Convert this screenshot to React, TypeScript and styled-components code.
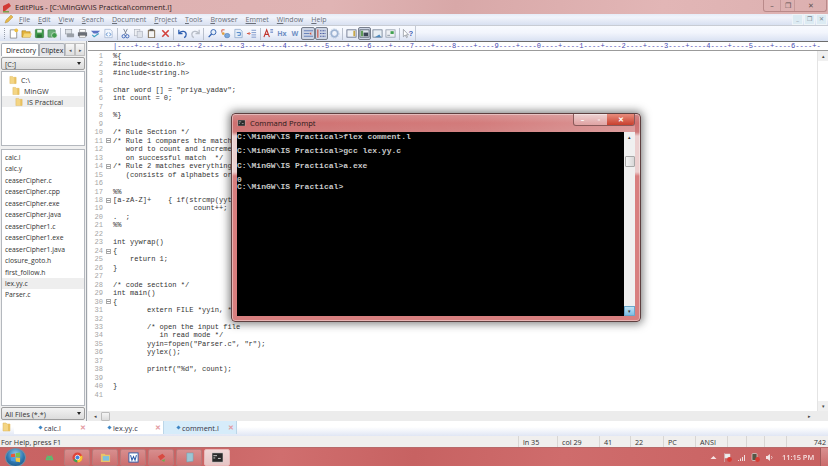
import * as React from 'react';
import styled, { createGlobalStyle } from 'styled-components';

const GlobalStyle = createGlobalStyle`
  html, body {
    margin: 0;
    padding: 0;
    height: 100%;
    overflow: hidden;
    background: #fff;
  }
  #root { height: 100%; }
`;

const UI_FONT = '"Open Sans", "Liberation Sans", sans-serif';
const MONO_FONT = '"Liberation Mono", monospace';

const Screen = styled.div`
  position: relative;
  width: 828px;
  height: 466px;
  display: flex;
  flex-direction: column;
  overflow: hidden;
  font-family: ${UI_FONT};
  color: #333;
  filter: blur(0.4px);
`;

/* title bar */
const TitleBar = styled.div`
  height: 14px;
  flex: none;
  display: flex;
  align-items: center;
  padding-left: 2px;
  background: linear-gradient(100deg, #dcb0b0 0%, #e0b4b4 40%, #d8a8a8 55%, #e2b6b6 80%, #dcb0b0 100%);
  font-size: 7.6px;
  color: #2c2020;
`;

const TitleText = styled.span`
  margin-left: 3px;
  flex: 1;
`;

const WinCaps = styled.div`
  display: flex;
  align-self: flex-start;
  height: 11px;
  margin-right: 1px;
  border: 1px solid #b98a8a;
  border-top: none;
  border-radius: 0 0 3px 3px;
`;

const WinCap = styled.div<{ $w: number }>`
  width: ${(p) => p.$w}px;
  display: flex;
  align-items: center;
  justify-content: center;
  color: #5c5050;
  font-size: 7px;
  line-height: 1;
  & + & { border-left: 1px solid #c79a9a; }
`;

/* menu bar */
const MenuBar = styled.div`
  height: 12px;
  flex: none;
  display: flex;
  align-items: center;
  padding-left: 4px;
  padding-bottom: 1px;
  background: linear-gradient(#e6ecf8, #f1f4fb 30%, #d8e0f1);
  border-bottom: 1px solid #c8ccd4;
  box-sizing: border-box;
  font-size: 7px;
  color: #6a6e78;
`;

const MenuItem = styled.span`
  margin-right: 8px;
  u { text-decoration: underline; text-underline-offset: 1px; }
`;

const ChildCaps = styled.div`
  margin-left: auto;
  display: flex;
  gap: 1px;
  height: 11px;
  margin-right: 1px;
`;

const ChildCap = styled.div`
  width: 11px;
  background: #dcebf3;
  border: 1px solid #eef4f8;
  box-sizing: border-box;
  display: flex;
  align-items: center;
  justify-content: center;
  color: #7c8792;
  font-size: 6px;
`;

/* tool bar */
const ToolBar = styled.div`
  height: 15px;
  flex: none;
  display: flex;
  align-items: center;
  padding-left: 4px;
  background: linear-gradient(#f8faff, #f2f5fc 45%, #d9e1f2);
`;

const ToolGrip = styled.div`
  width: 1px;
  height: 11px;
  margin-right: 0.5px;
  border-left: 1px dotted #9aa0ac;
`;

const ToolSep = styled.div`
  width: 1px;
  height: 12px;
  margin: 0 1.5px;
  background: #b9c0cd;
`;

const ToolBtn = styled.div<{ $on?: boolean }>`
  width: 13.1px;
  height: 13px;
  box-sizing: border-box;
  display: flex;
  align-items: center;
  justify-content: center;
  border-radius: 2px;
  border: 1px solid ${(p) => (p.$on ? '#777e8c' : 'transparent')};
  background: ${(p) => (p.$on ? '#ccd4e4' : 'transparent')};
  font-size: 7px;
  font-weight: 700;
  color: #6f8fc4;
  svg { width: 11px; height: 11px; display: block; }
`;

const ToolEnd = styled.div`
  width: 1px;
  height: 15px;
  margin-left: 1px;
  background: #c3c9d4;
`;

/* work area */
const Workspace = styled.div`
  flex: 1;
  min-height: 0;
  display: flex;
  background: #f0f0f0;
`;

const Sidebar = styled.div`
  width: 87px;
  flex: none;
  display: flex;
  flex-direction: column;
  padding: 2px 1px 1px 1px;
  box-sizing: border-box;
  background: #f0f0f0;
  border-right: 1px solid #9ea3aa;
`;

const SideTabs = styled.div`
  height: 14px;
  flex: none;
  display: flex;
  align-items: stretch;
  padding-bottom: 1px;
  box-sizing: border-box;
  font-size: 7px;
  color: #222;
`;

const SideTab = styled.div<{ $on?: boolean }>`
  width: ${(p) => (p.$on ? 38 : 26)}px;
  overflow: hidden;
  white-space: nowrap;
  display: flex;
  align-items: center;
  padding-left: ${(p) => (p.$on ? 4 : 1)}px;
  box-sizing: border-box;
  background: ${(p) => (p.$on ? '#fff' : '#e4e6ea')};
  border: 1px solid #a8adb5;
  border-bottom: none;
  border-radius: 2px 2px 0 0;
`;

const SideArrow = styled.div`
  width: 10px;
  display: flex;
  align-items: center;
  justify-content: center;
  font-size: 5px;
  color: #555;
  background: linear-gradient(#f7f7f7, #dedede);
  border: 1px solid #c0c0c0;
  box-sizing: border-box;
`;

const ComboBox = styled.div`
  flex: none;
  height: 13px;
  display: flex;
  align-items: center;
  justify-content: space-between;
  padding: 0 3px;
  box-sizing: border-box;
  font-size: 7.2px;
  color: #333;
  background: linear-gradient(#f3f3f3, #dcdcdc);
  border: 1px solid #9d9d9d;
  border-radius: 2px;
`;

const Caret = styled.span`
  width: 0;
  height: 0;
  border-left: 2.5px solid transparent;
  border-right: 2.5px solid transparent;
  border-top: 3px solid #222;
`;

const TreePanel = styled.div`
  flex: none;
  height: 75px;
  margin: 1px 0 3px;
  padding-top: 2px;
  box-sizing: border-box;
  background: #fff;
  border: 1px solid #b4b8be;
  font-size: 7.2px;
`;

const TreeRow = styled.div<{ $depth: number; $on?: boolean }>`
  height: 11px;
  display: flex;
  align-items: center;
  gap: 4px;
  padding-left: ${(p) => 7 + p.$depth * 3}px;
  background: ${(p) => (p.$on ? '#eeeeee' : 'transparent')};
  svg { width: 8px; height: 10px; flex: none; }
`;

const FileList = styled.div`
  flex: 1;
  min-height: 0;
  padding-top: 2px;
  box-sizing: border-box;
  background: #fff;
  border: 1px solid #b4b8be;
  font-size: 6.8px;
`;

const FileRow = styled.div<{ $on?: boolean }>`
  height: 11.46px;
  line-height: 11.46px;
  padding-left: 3px;
  background: ${(p) => (p.$on ? '#eeeeee' : 'transparent')};
`;

const FilterBox = styled(ComboBox)`
  margin-top: 1px;
`;

/* editor */
const EditorPane = styled.div`
  flex: 1;
  min-width: 0;
  display: flex;
  flex-direction: column;
  margin-left: 1px;
  background: #fff;
`;

const Ruler = styled.div`
  height: 10px;
  flex: none;
  padding-left: 25px;
  box-sizing: border-box;
  overflow: hidden;
  white-space: pre;
  background: #fff;
  border-top: 1px solid #6d6d6d;
  border-bottom: 1px solid #9b9b9b;
  font-family: ${MONO_FONT};
  font-size: 7.07px;
  line-height: 8px;
  color: #4a4ab0;
`;

const EditorBody = styled.div`
  flex: 1;
  min-height: 0;
  display: flex;
`;

const CodeArea = styled.div`
  flex: 1;
  min-width: 0;
  overflow: hidden;
  padding-top: 1px;
  font-family: ${MONO_FONT};
  font-size: 7.07px;
  color: #333;
`;

const CodeLine = styled.div`
  height: 8.47px;
  line-height: 8.47px;
  display: flex;
  white-space: pre;
`;

const LineNo = styled.span`
  width: 15px;
  flex: none;
  text-align: right;
  color: #a5a5a5;
`;

const FoldCell = styled.span`
  width: 10px;
  flex: none;
  display: flex;
  align-items: center;
  justify-content: center;
`;

const FoldBox = styled.span`
  width: 5px;
  height: 5px;
  box-sizing: border-box;
  border: 1px solid #aaa;
  position: relative;
  &::after {
    content: '';
    position: absolute;
    left: 0;
    right: 0;
    top: 1px;
    height: 1px;
    background: #999;
  }
`;

const VScroll = styled.div`
  width: 11px;
  flex: none;
  display: flex;
  flex-direction: column;
  justify-content: space-between;
  align-items: center;
  background: #fff;
  border-left: 1px solid #e4e4e4;
  box-sizing: border-box;
  font-size: 5px;
  color: #444;
`;

const ScrollArrow = styled.div`
  height: 10px;
  width: 100%;
  display: flex;
  align-items: center;
  justify-content: center;
  background: #f0f0f0;
`;

const HScroll = styled.div`
  height: 10px;
  flex: none;
  display: flex;
  align-items: center;
  background: #ececec;
  font-size: 5px;
  color: #444;
  padding-left: 6px;
`;

const HThumb = styled.div`
  width: 9px;
  height: 9px;
  margin-left: 4px;
  background: linear-gradient(#f5f5f5, #dcdcdc);
  border: 1px solid #bcbcbc;
  border-radius: 1px;
  box-sizing: border-box;
`;

const HEnd = styled.span`
  margin-left: auto;
  margin-right: 17px;
`;

/* document tabs */
const DocTabs = styled.div`
  height: 15px;
  flex: none;
  display: flex;
  align-items: flex-start;
  padding-left: 2px;
  background: linear-gradient(#fff 0, #fff 40%, #e0e6f4 100%);
  font-size: 7.4px;
  color: #334;
  svg { width: 9px; height: 10px; margin-top: 1px; margin-right: 3px; }
`;

const DocTab = styled.div<{ $w: number; $pad: number; $on?: boolean }>`
  width: ${(p) => p.$w}px;
  height: 13px;
  box-sizing: border-box;
  display: flex;
  align-items: center;
  padding-left: ${(p) => p.$pad}px;
  padding-right: 2px;
  gap: 2px;
  background: ${(p) => (p.$on ? '#d6ecfa' : '#fff')};
  border-right: ${(p) => (p.$on ? '1px solid #bcd6e8' : 'none')};
  border-left: ${(p) => (p.$on ? '1px solid #bcd6e8' : 'none')};
`;

const DocDot = styled.span`
  width: 3px;
  height: 3px;
  background: #3f86c4;
  transform: rotate(45deg);
  flex: none;
`;

const DocClose = styled.span`
  margin-left: auto;
  font-size: 7px;
  font-weight: 700;
  line-height: 1;
  color: #e39aa0;
`;

/* status bar */
const StatusBar = styled.div`
  height: 11px;
  flex: none;
  display: flex;
  align-items: center;
  background: #f0efee;
  font-size: 7.2px;
  color: #333;
`;

const StatusHelp = styled.div`
  flex: 1;
  padding-left: 1px;
`;

const StatusCell = styled.div<{ $w: number; $right?: boolean }>`
  width: ${(p) => p.$w}px;
  height: 100%;
  box-sizing: border-box;
  display: flex;
  align-items: center;
  justify-content: ${(p) => (p.$right ? 'flex-end' : 'flex-start')};
  padding: ${(p) => (p.$right ? '0 2px 0 0' : '0 0 0 4px')};
  border-left: 1px solid #d8d6d4;
`;

/* taskbar */
const Taskbar = styled.div`
  height: 19px;
  flex: none;
  display: flex;
  align-items: center;
  background: linear-gradient(100deg, #c96464 0%, #c86262 20%, #d06e6e 34%, #c76262 50%, #cf6c6c 68%, #c76060 100%);
  border-top: 1px solid #b86a6a;
  box-sizing: border-box;
`;

const StartOrb = styled.div`
  width: 21px;
  height: 19px;
  margin-left: 5px;
  border-radius: 50%;
  background: radial-gradient(circle at 50% 30%, #8fc8ea, #2f78b0 55%, #144a78);
  border: 1px solid #6c90a8;
  box-sizing: border-box;
  display: flex;
  align-items: center;
  justify-content: center;
  svg { width: 11px; height: 11px; }
`;

const TaskSlot = styled.div`
  width: 26px;
  margin-left: 10px;
  display: flex;
  justify-content: center;
  svg { width: 11px; height: 11px; }
`;

const TaskBtn = styled.div<{ $on?: boolean }>`
  width: 26px;
  height: 17px;
  margin-left: 2px;
  box-sizing: border-box;
  display: flex;
  align-items: center;
  justify-content: center;
  border: 1px solid ${(p) => (p.$on ? '#e8b8b8' : '#b87a7a')};
  border-radius: 2px;
  background: ${(p) =>
    p.$on
      ? 'linear-gradient(#f0d8d8, #e6c4c4)'
      : 'linear-gradient(rgba(255,255,255,.28), rgba(255,255,255,.08))'};
  svg { width: 11px; height: 11px; }
`;

const Tray = styled.div`
  margin-left: auto;
  height: 100%;
  display: flex;
  align-items: center;
  gap: 5px;
  color: #f7e4e4;
  svg { width: 9px; height: 9px; flex: none; }
`;

const Clock = styled.span`
  width: 30px;
  margin-left: 3px;
  white-space: nowrap;
  font-size: 7.4px;
  font-weight: 600;
  color: #f6e2e2;
`;

const ShowDesktop = styled.div`
  width: 8px;
  height: 100%;
  margin-left: 3px;
  background: linear-gradient(rgba(255,255,255,.3), rgba(255,255,255,.08));
  border-left: 1px solid #a05a5a;
  box-sizing: border-box;
`;

/* floating console window */
const ConsoleWindow = styled.div`
  position: absolute;
  left: 231px;
  top: 113px;
  width: 410px;
  height: 209px;
  box-sizing: border-box;
  display: flex;
  flex-direction: column;
  padding: 0 5px 5px 5px;
  border: 1px solid #5e4040;
  border-radius: 4px;
  background: linear-gradient(#d38a8a 0, #cf7070 9px, #cf7878 18px, #ecd0d0 22px, #ecd0d0 58px, #d87f7f 62px, #d87f7f 100%);
  box-shadow: 0 0 9px 2px rgba(30, 30, 30, 0.55), inset 0 0 0 1px rgba(255, 255, 255, 0.4);
`;

const ConsoleHead = styled.div`
  height: 18px;
  flex: none;
  display: flex;
  align-items: flex-start;
  background: linear-gradient(90deg, transparent 0, rgba(255,255,255,.08) 60%, rgba(255,255,255,.28) 100%);
`;

const ConsoleTitle = styled.span`
  flex: 1;
  display: flex;
  align-items: center;
  gap: 4px;
  height: 16px;
  margin-top: 1px;
  font-size: 7.6px;
  color: #2a1a1a;
  svg { width: 9px; height: 6px; }
`;

const ConsoleCaps = styled.div`
  display: flex;
  height: 11px;
  border: 1px solid #8a5a5a;
  border-top: none;
  border-radius: 0 0 3px 3px;
  overflow: hidden;
`;

const ConsoleCap = styled.div<{ $w: number; $red?: boolean }>`
  width: ${(p) => p.$w}px;
  display: flex;
  align-items: center;
  justify-content: center;
  font-size: 7px;
  font-weight: 700;
  line-height: 1;
  color: #fff;
  background: ${(p) =>
    p.$red
      ? 'linear-gradient(#e88c7c, #c8402e)'
      : 'linear-gradient(rgba(255,255,255,.5), rgba(255,255,255,.18))'};
`;

const ConsoleBody = styled.div`
  flex: 1;
  min-height: 0;
  display: flex;
`;

const ConsoleText = styled.pre`
  flex: 1;
  margin: 0;
  background: #000;
  color: #c8c8c8;
  font-family: ${MONO_FONT};
  font-size: 8.05px;
  font-weight: 700;
  line-height: 7.2px;
  padding-top: 1px;
  overflow: hidden;
`;

const ConsoleScroll = styled.div`
  width: 11px;
  flex: none;
  display: flex;
  flex-direction: column;
  align-items: center;
  background: #f0f0f0;
  font-size: 5px;
  color: #333;
`;

const ConsoleArrow = styled.div<{ $hot?: boolean }>`
  height: 10px;
  width: 100%;
  flex: none;
  box-sizing: border-box;
  display: flex;
  align-items: center;
  justify-content: center;
  background: ${(p) => (p.$hot ? 'linear-gradient(#bfe3f6, #7dbde4)' : '#f0f0f0')};
  border: 1px solid ${(p) => (p.$hot ? '#6aa8cc' : '#f0f0f0')};
`;

const ConsoleThumb = styled.div`
  width: 10px;
  height: 11px;
  margin-top: 14px;
  box-sizing: border-box;
  background: linear-gradient(90deg, #f4f4f4, #d8d8d8);
  border: 1px solid #a8a8a8;
  border-radius: 1px;
`;

const ScrollGap = styled.div`
  flex: 1;
`;

const Folder = ({ tone = '#f4d584' }: { tone?: string }) => (
  <svg viewBox="0 0 9 10">
    <path d="M1 1h3l1 1h3v7H1z" fill={tone} stroke="#dcb458" strokeWidth=".5" />
    <path d="M6 2h2v7H6z" fill="#e8c060" />
  </svg>
);

const icons: Record<string, React.ReactNode> = {
  new: (
    <svg viewBox="0 0 12 12">
      <path d="M2.5 2h5l2 2v7h-7z" fill="#fff" stroke="#7a7a7a" strokeWidth=".8" />
      <circle cx="9" cy="2.5" r="2" fill="#f0c040" />
    </svg>
  ),
  open: (
    <svg viewBox="0 0 12 12">
      <path d="M1 3h4l1 1h4v6H1z" fill="#e2b23c" stroke="#a07a20" strokeWidth=".6" />
      <path d="M2 10l1.5-4H12l-2 4z" fill="#f5d878" />
    </svg>
  ),
  save: (
    <svg viewBox="0 0 12 12">
      <rect x="1.5" y="1.5" width="9" height="9" rx=".8" fill="#3f9a4c" stroke="#2b6e36" strokeWidth=".6" />
      <rect x="3.5" y="2" width="5" height="3" fill="#e8f3e8" />
      <rect x="3.5" y="7" width="5" height="3.4" fill="#2b6e36" />
    </svg>
  ),
  saveall: (
    <svg viewBox="0 0 12 12">
      <rect x="1" y="2" width="8" height="8" rx=".8" fill="#6bb078" stroke="#38794a" strokeWidth=".6" />
      <circle cx="8" cy="8" r="3" fill="#3f9a4c" stroke="#e7f3e7" strokeWidth=".7" />
    </svg>
  ),
  preview: (
    <svg viewBox="0 0 12 12">
      <rect x="1.5" y="1.5" width="7" height="5" fill="#dfe3e8" stroke="#8a9098" strokeWidth=".6" />
      <rect x="3" y="6" width="8" height="4" rx=".6" fill="#9aa0a8" />
    </svg>
  ),
  print: (
    <svg viewBox="0 0 12 12">
      <rect x="3" y="1.5" width="6" height="3" fill="#fff" stroke="#777" strokeWidth=".6" />
      <rect x="1" y="4.5" width="10" height="4.5" rx=".6" fill="#6a6e76" />
      <rect x="3" y="8" width="6" height="2.5" fill="#f2f2f2" stroke="#777" strokeWidth=".5" />
    </svg>
  ),
  spell: (
    <svg viewBox="0 0 12 12">
      <path d="M1 3h10L8 6H4z" fill="#5c72c4" />
      <path d="M2.5 7.5l2 2 5-3.5" fill="none" stroke="#3fa0c0" strokeWidth="1.2" />
    </svg>
  ),
  browser: (
    <svg viewBox="0 0 12 12">
      <path d="M2 1.5h6l2 2v7H2z" fill="#f3f7fd" stroke="#8aa0c4" strokeWidth=".6" />
      <path d="M5 5L3.5 7 5 9M7 5l1.5 2L7 9" fill="none" stroke="#3f7ac4" strokeWidth=".9" />
    </svg>
  ),
  cut: (
    <svg viewBox="0 0 12 12">
      <path d="M4 1l3 6M8 1L5 7" stroke="#7a8290" strokeWidth="1" />
      <circle cx="4" cy="9" r="1.8" fill="none" stroke="#3a62b4" strokeWidth="1" />
      <circle cx="8" cy="9" r="1.8" fill="none" stroke="#3a62b4" strokeWidth="1" />
    </svg>
  ),
  copy: (
    <svg viewBox="0 0 12 12">
      <rect x="1.5" y="1.5" width="6" height="7" fill="#eef0f4" stroke="#a4a9b4" strokeWidth=".6" />
      <rect x="4.5" y="3.5" width="6" height="7" fill="#dfe3ea" stroke="#a4a9b4" strokeWidth=".6" />
    </svg>
  ),
  paste: (
    <svg viewBox="0 0 12 12">
      <rect x="2" y="2" width="8" height="9" rx=".6" fill="#8a7a64" />
      <rect x="3.2" y="3.5" width="5.6" height="6.5" fill="#f4f4f4" />
      <rect x="4" y="1" width="4" height="2" fill="#5c5c5c" />
    </svg>
  ),
  del: (
    <svg viewBox="0 0 12 12">
      <path d="M2.5 2.5l7 7M9.5 2.5l-7 7" stroke="#d2403c" strokeWidth="1.7" />
    </svg>
  ),
  undo: (
    <svg viewBox="0 0 12 12">
      <path d="M2 2v4h4M2.5 5.5C5 2.5 10 3.5 10 7c0 1.5-.8 2.8-2.2 3.5" fill="none" stroke="#2f5fb0" strokeWidth="1.4" />
    </svg>
  ),
  redo: (
    <svg viewBox="0 0 12 12">
      <path d="M10 2v4H6M9.5 5.5C7 2.500 2 3.500 2 7c0 1.500.8 2.800 2.200 3.500" fill="none" stroke="#b8bec8" strokeWidth="1.4" />
    </svg>
  ),
  find: (
    <svg viewBox="0 0 12 12">
      <circle cx="7" cy="4.5" r="2.8" fill="#e6f0fa" stroke="#2f5fb0" strokeWidth="1" />
      <path d="M5 6.5L1.8 10" stroke="#2f5fb0" strokeWidth="1.4" />
    </svg>
  ),
  replace: (
    <svg viewBox="0 0 12 12">
      <path d="M2 5V2h3" fill="none" stroke="#d2503c" strokeWidth="1" />
      <rect x="5" y="6" width="5.5" height="4.5" rx="2" fill="#7aa8dc" stroke="#3f6fb0" strokeWidth=".6" />
      <circle cx="3.5" cy="6" r="1.5" fill="#e0a040" />
    </svg>
  ),
  jump: (
    <svg viewBox="0 0 12 12">
      <path d="M2 1.5h6l2 2v7H2z" fill="#e6eef8" stroke="#7f9cc4" strokeWidth=".7" />
      <path d="M4 5h4v3H5" fill="none" stroke="#3f7ac4" strokeWidth="1" />
    </svg>
  ),
  indent: (
    <svg viewBox="0 0 12 12">
      <path d="M6 2.5h5M6 5h5M6 7.5h5M6 10h5" stroke="#6f8cc4" strokeWidth=".9" />
      <path d="M1 6h3M3 4.5L4.5 6 3 7.5" fill="none" stroke="#d2503c" strokeWidth="1" />
    </svg>
  ),
  font: (
    <svg viewBox="0 0 12 12">
      <path d="M1 10l3-8 3 8M2.2 7h3.6" fill="none" stroke="#c0342c" strokeWidth="1.2" />
      <path d="M8 2h3M8 4.5h3" stroke="#3f62b4" strokeWidth="1" />
    </svg>
  ),
  wrap: (
    <svg viewBox="0 0 12 12">
      <path d="M1 3h10M1 6h6M1 9h10" stroke="#5f7cb8" strokeWidth="1" />
      <path d="M7 6l2-1.5v3z" fill="#d2503c" />
    </svg>
  ),
  lineNo: (
    <svg viewBox="0 0 12 12">
      <path d="M2 1.5v9" stroke="#d2503c" strokeWidth="1.2" />
      <path d="M4.5 3h6M4.5 6h6M4.5 9h6" stroke="#44559c" strokeWidth="1.3" strokeDasharray="1 .6" />
    </svg>
  ),
  gear: (
    <svg viewBox="0 0 12 12">
      <circle cx="6" cy="6" r="3.6" fill="none" stroke="#9fb4d2" strokeWidth="2" />
      <circle cx="6" cy="6" r="5" fill="none" stroke="#b8c8de" strokeWidth="1" strokeDasharray="1.5 1.2" />
    </svg>
  ),
  paneA: (
    <svg viewBox="0 0 12 12">
      <rect x="1" y="2" width="10" height="8" fill="#eef2f8" stroke="#55607a" strokeWidth=".8" />
      <rect x="8" y="3" width="2" height="6" fill="#c8a848" />
    </svg>
  ),
  paneB: (
    <svg viewBox="0 0 12 12">
      <rect x="1" y="2" width="10" height="8" fill="#e0e6ee" stroke="#44505f" strokeWidth=".8" />
      <rect x="2" y="3" width="2.5" height="6" fill="#5f9a58" />
      <rect x="5" y="5" width="5" height="4" fill="#3c4656" />
    </svg>
  ),
  paneC: (
    <svg viewBox="0 0 12 12">
      <rect x="1" y="2" width="10" height="8" fill="#e8eef4" stroke="#667488" strokeWidth=".8" />
      <path d="M3 10l5-3 2 3z" fill="#4f8abe" />
    </svg>
  ),
  paneD: (
    <svg viewBox="0 0 12 12">
      <rect x="1" y="2" width="10" height="8" fill="#eef0f4" stroke="#8a94a4" strokeWidth=".8" />
      <rect x="6" y="3.5" width="3.5" height="3" fill="#3fa04c" />
      <path d="M2.5 8h3" stroke="#8a94a4" />
    </svg>
  ),
  help: (
    <svg viewBox="0 0 12 12">
      <path d="M1.5 1.5v8l2-1.8L5 10.5l1-.5-1.300-2.600H7z" fill="#fff" stroke="#6a6f78" strokeWidth=".6" />
      <text x="7" y="9" fontSize="8.5" fontWeight="700" fill="#3f62b4" fontFamily="Liberation Sans">?</text>
    </svg>
  ),
};

type ToolItem = string | { sep: true } | { label: string } | { icon: string; on: true };

const toolItems: ToolItem[] = [
  'new', 'open', 'save', 'saveall', { sep: true },
  'preview', 'print', 'spell', 'browser', { sep: true },
  'cut', 'copy', 'paste', 'del', { sep: true },
  'undo', 'redo', { sep: true },
  'find', 'replace', 'jump', 'indent', { sep: true },
  'font', { label: 'Hx' }, { label: 'W' }, { icon: 'wrap', on: true }, { icon: 'lineNo', on: true }, 'gear', { sep: true },
  'paneA', { icon: 'paneB', on: true }, 'paneC', 'paneD', { sep: true },
  'help',
];

const menus = [
  ['F', 'ile'], ['E', 'dit'], ['V', 'iew'], ['S', 'earch'], ['D', 'ocument'], ['P', 'roject'],
  ['T', 'ools'], ['B', 'rowser'], ['Em', 'met'], ['W', 'indow'], ['H', 'elp'],
];

const files = [
  'calc.l', 'calc.y', 'ceaserCipher.c', 'ceaserCipher.cpp', 'ceaserCipher.exe', 'ceaserCipher.java',
  'ceaserCipher1.c', 'ceaserCipher1.exe', 'ceaserCipher1.java', 'closure_goto.h', 'first_follow.h',
  'lex.yy.c', 'Parser.c',
];

// lines under the console window stop where the window starts to cover them
const code = [
  '%{',
  '#include<stdio.h>',
  '#include<string.h>',
  '',
  'char word [] = "priya_yadav";',
  'int count = 0;',
  '',
  '%}',
  '',
  '/* Rule Section */',
  '/* Rule 1 compares the match',
  '   word to count and increme',
  '   on successful match  */',
  '/* Rule 2 matches everything',
  '   (consists of alphabets or',
  '',
  '%%',
  '[a-zA-Z]+    { if(strcmp(yyt',
  '                   count++;',
  '.  ;',
  '%%',
  '',
  'int yywrap()',
  '{',
  '    return 1;',
  '}',
  '',
  '/* code section */',
  'int main()',
  '{',
  '        extern FILE *yyin, *',
  '',
  '        /* open the input file',
  '           in read mode */',
  '        yyin=fopen("Parser.c", "r");',
  '        yylex();',
  '',
  '        printf("%d", count);',
  '',
  '}',
  '',
];

const folded = [11, 14, 18, 24, 30];

const rulerText = '|' + [1, 2, 3, 4, 5, 6, 7, 8, 9, 0, 1, 2, 3, 4, 5, 6]
  .map((n) => `----+----${n}`)
  .join('') + '----+-';

const consoleOutput = `C:\\MinGW\\IS Practical>flex comment.l

C:\\MinGW\\IS Practical>gcc lex.yy.c

C:\\MinGW\\IS Practical>a.exe

0
C:\\MinGW\\IS Practical>`;

const CmdGlyph = () => (
  <svg viewBox="0 0 12 10">
    <rect width="12" height="10" fill="#2a2a2a" stroke="#ddd" strokeWidth=".6" />
    <path d="M1.5 3h4M1.5 5.5h2M6.5 6h3" stroke="#eee" strokeWidth=".9" />
  </svg>
);

const statusCells: [string, number, boolean?][] = [
  ['ln 35', 39], ['col 29', 42], ['41', 31], ['22', 33], ['PC', 32], ['ANSI', 32], ['', 19], ['', 18], ['', 22], ['742', 42, true],
];

export default function App() {
  return (
    <Screen>
      <GlobalStyle />
      <TitleBar>
        <svg width="10" height="11" viewBox="0 0 10 11">
          <path d="M1 4l6-3 2 3-6 5H1z" fill="#d23a34" />
          <path d="M1 9h6v1.5H1z" fill="#7aa04c" />
        </svg>
        <TitleText>EditPlus - [C:\MinGW\IS Practical\comment.l]</TitleText>
        <WinCaps>
          <WinCap $w={16}>–</WinCap>
          <WinCap $w={13}>❐</WinCap>
          <WinCap $w={31}>✕</WinCap>
        </WinCaps>
      </TitleBar>

      <MenuBar>
        <svg width="10" height="10" viewBox="0 0 10 10" style={{ marginRight: 5 }}>
          <path d="M1 9l1-3 5-5 2 2-5 5z" fill="#e6b84c" stroke="#a8842c" strokeWidth=".4" />
        </svg>
        {menus.map(([first, rest]) => (
          <MenuItem key={first + rest}>
            <u>{first}</u>
            {rest}
          </MenuItem>
        ))}
        <ChildCaps>
          <ChildCap>_</ChildCap>
          <ChildCap>❐</ChildCap>
          <ChildCap>✕</ChildCap>
        </ChildCaps>
      </MenuBar>

      <ToolBar>
        <ToolGrip />
        {toolItems.map((item, i) => {
          if (typeof item === 'string') return <ToolBtn key={i}>{icons[item]}</ToolBtn>;
          if ('sep' in item) return <ToolSep key={i} />;
          if ('label' in item) return <ToolBtn key={i}>{item.label}</ToolBtn>;
          return (
            <ToolBtn key={i} $on>
              {icons[item.icon]}
            </ToolBtn>
          );
        })}
        <ToolEnd />
      </ToolBar>

      <Workspace>
        <Sidebar>
          <SideTabs>
            <SideTab $on>Directory</SideTab>
            <SideTab>Cliptex</SideTab>
            <SideArrow>◂</SideArrow>
            <SideArrow>▸</SideArrow>
          </SideTabs>
          <ComboBox>
            [C:]
            <Caret />
          </ComboBox>
          <TreePanel>
            <TreeRow $depth={0}>
              <Folder />
              C:\
            </TreeRow>
            <TreeRow $depth={1}>
              <Folder />
              MinGW
            </TreeRow>
            <TreeRow $depth={2} $on>
              <Folder />
              IS Practical
            </TreeRow>
          </TreePanel>
          <FileList>
            {files.map((f) => (
              <FileRow key={f} $on={f === 'lex.yy.c'}>
                {f}
              </FileRow>
            ))}
          </FileList>
          <FilterBox>
            All Files (*.*)
            <Caret />
          </FilterBox>
        </Sidebar>

        <EditorPane>
          <Ruler>{rulerText}</Ruler>
          <EditorBody>
            <CodeArea>
              {code.map((text, i) => (
                <CodeLine key={i}>
                  <LineNo>{i + 1}</LineNo>
                  <FoldCell>{folded.includes(i + 1) && <FoldBox />}</FoldCell>
                  {text}
                </CodeLine>
              ))}
            </CodeArea>
            <VScroll>
              <ScrollArrow>▴</ScrollArrow>
              <ScrollArrow>▾</ScrollArrow>
            </VScroll>
          </EditorBody>
          <HScroll>
            ◂
            <HThumb />
            <HEnd>▸</HEnd>
          </HScroll>
        </EditorPane>
      </Workspace>

      <DocTabs>
        <Folder />
        <DocTab $w={74} $pad={25}>
          <DocDot />
          calc.l
          <DocClose>✕</DocClose>
        </DocTab>
        <DocTab $w={75} $pad={20}>
          <DocDot />
          lex.yy.c
          <DocClose>✕</DocClose>
        </DocTab>
        <DocTab $w={74} $pad={13} $on>
          <DocDot />
          comment.l
          <DocClose>✕</DocClose>
        </DocTab>
      </DocTabs>

      <StatusBar>
        <StatusHelp>For Help, press F1</StatusHelp>
        {statusCells.map(([text, w, right], i) => (
          <StatusCell key={i} $w={w} $right={right}>
            {text}
          </StatusCell>
        ))}
      </StatusBar>

      <Taskbar>
        <StartOrb>
          <svg viewBox="0 0 12 12">
            <path d="M1 2.5l4.5-1v4H1z" fill="#e8583c" />
            <path d="M6.2 1.4l4.8-.8v4.9H6.2z" fill="#7cc04c" />
            <path d="M1 6.3h4.5v4L1 9.5z" fill="#4a9ae0" />
            <path d="M6.2 6.3H11v4.9l-4.8-.8z" fill="#f4c83c" />
          </svg>
        </StartOrb>
        <TaskSlot>
          <svg viewBox="0 0 12 12">
            <path d="M2 8a4 4 0 0 1 8 0v1H2z" fill="#58c070" />
            <circle cx="4.5" cy="6.8" r=".6" fill="#c86464" />
            <circle cx="7.5" cy="6.8" r=".6" fill="#c86464" />
            <path d="M4 4.5L3 3M8 4.5L9 3" stroke="#58c070" strokeWidth=".7" />
          </svg>
        </TaskSlot>
        <TaskBtn>
          <svg viewBox="0 0 12 12">
            <circle cx="6" cy="6" r="5.5" fill="#e0453a" />
            <path d="M6 6L1.2 8.8A5.5 5.5 0 0 0 6 11.5z" fill="#3aa655" />
            <path d="M6 6l5-2.3A5.5 5.5 0 0 1 6 11.5z" fill="#f6c533" />
            <circle cx="6" cy="6" r="2.5" fill="#3f83e0" stroke="#fff" strokeWidth=".8" />
          </svg>
        </TaskBtn>
        <TaskBtn>
          <svg viewBox="0 0 12 12">
            <path d="M1 2h4l1 1h5v8H1z" fill="#e8c468" />
            <rect x="3" y="4.5" width="7" height="5" fill="#7cc0e0" />
          </svg>
        </TaskBtn>
        <TaskBtn>
          <svg viewBox="0 0 12 12">
            <rect x="1" y="1" width="10" height="10" fill="#fff" stroke="#2a5aa8" strokeWidth="1" />
            <path d="M2.8 3.5l1.5 5.5 1.7-4 1.7 4 1.500-5.500" fill="none" stroke="#2a5aa8" strokeWidth="1.1" />
          </svg>
        </TaskBtn>
        <TaskBtn>
          <svg viewBox="0 0 12 12">
            <path d="M2 5l5-3 3 3-5 4z" fill="#d84a40" />
            <path d="M6 9l4-1-1 3z" fill="#6cb04c" />
          </svg>
        </TaskBtn>
        <TaskBtn>
          <svg viewBox="0 0 12 12">
            <path d="M3 1h7v9l-7 1z" fill="#9cc6d4" stroke="#6a9cae" strokeWidth=".5" />
          </svg>
        </TaskBtn>
        <TaskBtn $on>
          <CmdGlyph />
        </TaskBtn>
        <Tray>
          <svg viewBox="0 0 9 9">
            <path d="M1.5 6L4.5 3l3 3z" fill="#f7e4e4" />
          </svg>
          <svg viewBox="0 0 9 9">
            <path d="M1.5 0v9M2 1h5v4H2z" fill="#eee" stroke="#ddd" strokeWidth=".5" />
            <circle cx="6.5" cy="6.5" r="2.4" fill="#d83c34" />
          </svg>
          <svg viewBox="0 0 9 9">
            <path d="M1 7h1v1H1zM3 5.500h1V8H3zM5 4h1v4H5zM7 2h1v6H7z" fill="#f0dede" />
          </svg>
          <svg viewBox="0 0 9 9">
            <rect x="1" y="0.5" width="5" height="7" rx="1" fill="#554" stroke="#eee" strokeWidth=".6" />
            <circle cx="6.5" cy="6.5" r="2.4" fill="#d83c34" />
          </svg>
          <svg viewBox="0 0 9 9">
            <path d="M1 3h1.500L5 1v7L2.500 6H1z" fill="#f2e2e2" />
            <path d="M6.300 3a2 2 0 0 1 0 3" fill="none" stroke="#f2e2e2" strokeWidth=".7" />
          </svg>
          <Clock>11:15 PM</Clock>
          <ShowDesktop />
        </Tray>
      </Taskbar>

      <ConsoleWindow>
        <ConsoleHead>
          <ConsoleTitle>
            <CmdGlyph />
            Command Prompt
          </ConsoleTitle>
          <ConsoleCaps>
            <ConsoleCap $w={17}>–</ConsoleCap>
            <ConsoleCap $w={16}>▫</ConsoleCap>
            <ConsoleCap $w={27} $red>
              ✕
            </ConsoleCap>
          </ConsoleCaps>
        </ConsoleHead>
        <ConsoleBody>
          <ConsoleText>{consoleOutput}</ConsoleText>
          <ConsoleScroll>
            <ConsoleArrow>▴</ConsoleArrow>
            <ConsoleThumb />
            <ScrollGap />
            <ConsoleArrow $hot>▾</ConsoleArrow>
          </ConsoleScroll>
        </ConsoleBody>
      </ConsoleWindow>
    </Screen>
  );
}
